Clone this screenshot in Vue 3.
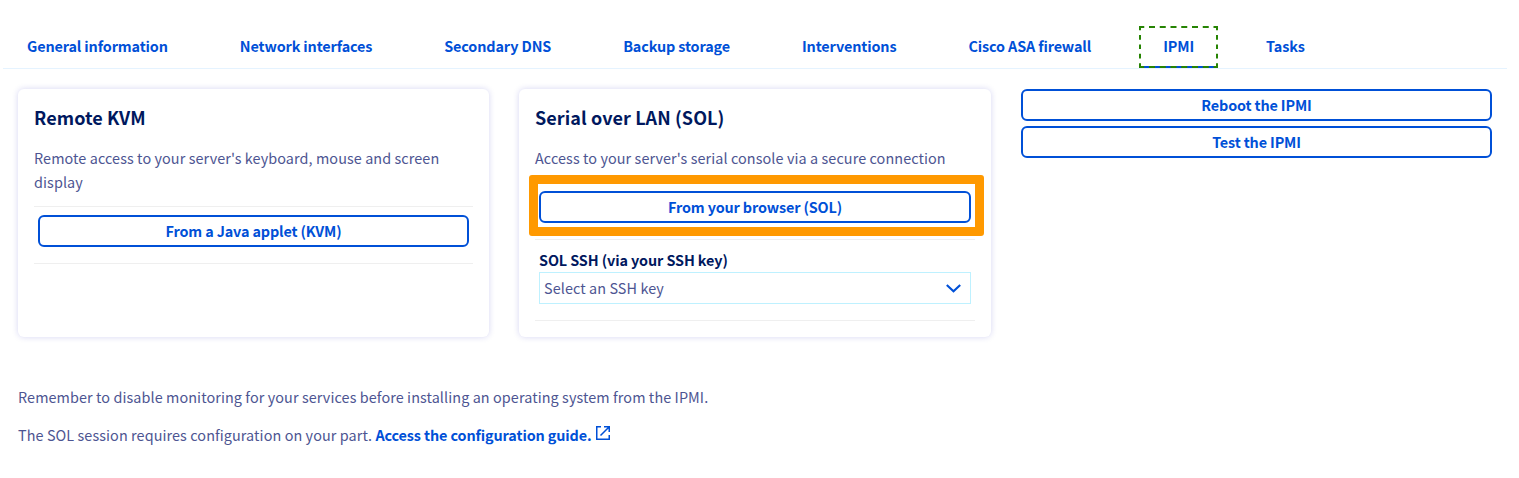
<script setup>
const tabs = [
  'General information',
  'Network interfaces',
  'Secondary DNS',
  'Backup storage',
  'Interventions',
  'Cisco ASA firewall',
  'IPMI',
  'Tasks',
]
const active = 'IPMI'
</script>

<template>
  <main class="page">
    <nav class="tabs">
      <a v-for="tab in tabs" :key="tab" class="tab" :class="{ active: tab === active }">
        {{ tab }}
        <svg v-if="tab === active" class="focus" width="79" height="42" viewBox="0 0 79 42" fill="none" stroke="#268403" stroke-width="2">
          <path d="M0 1 H79" stroke-dasharray="6 4.75" stroke-dashoffset="0.75" />
          <path d="M0 41 H79" stroke-dasharray="6 4.75" stroke-dashoffset="0.75" />
          <path d="M1 0 V42" stroke-dasharray="4.7 4.7" stroke-dashoffset="0.4" />
          <path d="M78 0 V42" stroke-dasharray="4.7 4.7" stroke-dashoffset="0.4" />
        </svg>
      </a>
    </nav>

    <div class="columns">
      <section class="card">
        <h2>Remote KVM</h2>
        <p class="desc">Remote access to your server's keyboard, mouse and screen display</p>
        <div class="action">
          <button class="btn">From a Java applet (KVM)</button>
        </div>
      </section>

      <section class="card">
        <h2>Serial over LAN (SOL)</h2>
        <p class="desc">Access to your server's serial console via a secure connection</p>
        <div class="action">
          <button class="btn">From your browser (SOL)</button>
          <span class="highlight"></span>
        </div>
        <div class="field">
          <label>SOL SSH (via your SSH key)</label>
          <div class="select">
            <span>Select an SSH key</span>
            <svg width="16" height="10" viewBox="0 0 16 10">
              <path d="M1.8 1.9 L8.5 8.3 L15.2 1.9" fill="none" stroke="#0050d7" stroke-width="2.1" />
            </svg>
          </div>
        </div>
      </section>

      <div class="side">
        <button class="btn">Reboot the IPMI</button>
        <button class="btn">Test the IPMI</button>
      </div>
    </div>

    <div class="notes">
      <p>Remember to disable monitoring for your services before installing an operating system from the IPMI.</p>
      <p>
        <span>The SOL session requires configuration on your part. </span><a class="link">Access the configuration guide.</a>
        <svg class="ext" width="14" height="14" viewBox="0 0 14 14" fill="none" stroke="#0050d7" stroke-width="1.5">
          <path d="M5 0.75 H0.75 V13.25 H13.25 V9" />
          <path d="M8 0.75 H13.25 V6 M13.25 0.75 L4.5 9.5" />
        </svg>
      </p>
    </div>
  </main>
</template>

<style>
body {
  margin: 0;
  background: #fff;
}
</style>

<style scoped>
.page {
  box-sizing: border-box;
  width: 1519px;
  height: 478px;
  overflow: hidden;
  padding-top: 26px;
  font-family: "Noto Sans CJK SC", "Noto Sans", sans-serif;
  font-size: 14.4px;
  line-height: 24px;
  letter-spacing: 0.087px;
  color: #4d5592;
}
.tabs {
  display: flex;
  gap: 24px;
  width: 1504px;
  height: 42px;
  margin-left: 3px;
  border-bottom: 1px solid #e5f3ff;
}
.tab {
  position: relative;
  box-sizing: border-box;
  height: 42px;
  padding: 8px 24px;
  font-weight: 700;
  letter-spacing: -0.128px;
  color: #0050d7;
  white-space: nowrap;
}
.tab.active {
  border-bottom: 2px solid #0050d7;
}
.focus {
  position: absolute;
  left: 0;
  top: 0;
}
.columns {
  display: grid;
  grid-template-columns: 471px 472px 471px;
  column-gap: 30px;
  height: 248px;
  margin: 20px 0 0 18px;
}
.card {
  box-sizing: border-box;
  padding: 16px;
  border-radius: 6px;
  background: #fff;
  box-shadow: 0 0 6px rgba(0, 0, 175, 0.17);
}
h2 {
  margin: 0;
  font-size: 18px;
  line-height: 24px;
  font-weight: 700;
  color: #00185e;
}
.desc {
  margin: 17px 0 0;
}
.action {
  position: relative;
  height: 58px;
  box-sizing: border-box;
  margin-top: 12px;
  padding: 8px 4px 0;
  border-top: 1px solid #efefef;
}
.action,
.field {
  border-bottom: 1px solid #efefef;
}
.btn {
  box-sizing: border-box;
  display: block;
  width: 100%;
  height: 32px;
  padding: 0;
  border: 2px solid #0050d7;
  border-radius: 6px;
  background: #fff;
  font: inherit;
  line-height: 28px;
  font-weight: 700;
  letter-spacing: -0.14px;
  color: #0050d7;
}
.highlight {
  position: absolute;
  left: -6px;
  top: -8px;
  box-sizing: border-box;
  width: 455px;
  height: 61px;
  border: 9px solid #ff9900;
  border-radius: 3px;
}
.field {
  box-sizing: border-box;
  height: 81px;
  padding: 8px 4px 0;
}
label {
  display: block;
  font-weight: 700;
  letter-spacing: -0.1px;
  color: #00185e;
}
.select {
  box-sizing: border-box;
  display: flex;
  align-items: center;
  justify-content: space-between;
  height: 32px;
  padding: 0 9px 0 4px;
  border: 1px solid #bef1ff;
}
.side {
  display: flex;
  flex-direction: column;
  gap: 5px;
}
.notes {
  margin: 48px 0 0 18px;
}
.notes p {
  margin: 0 0 14px;
  white-space: nowrap;
}
.link {
  font-weight: 700;
  letter-spacing: -0.11px;
  color: #0050d7;
}
.ext {
  margin-left: 4px;
  vertical-align: 1px;
}
</style>
